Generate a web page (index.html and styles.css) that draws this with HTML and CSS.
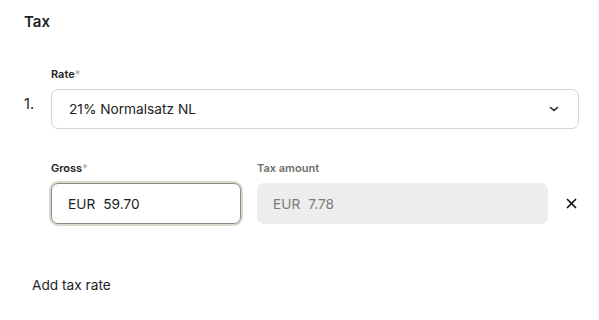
FILE: index.html
```html
<!DOCTYPE html>
<html>
<head>
<meta charset="utf-8">
<link rel="stylesheet" href="styles.css">
</head>
<body>
<div class="page">
  <h2 class="title">Tax</h2>
  <div class="rate-row">
    <div class="index">1.</div>
    <div class="rate-fields">
      <div class="field">
        <label class="label">Rate<span class="req">*</span></label>
        <div class="select">
          <span>21% Normalsatz NL</span>
          <svg class="chev" width="10" height="6" viewBox="0 0 10 6"><path d="M1.5 1.5 L5 4.5 L8.5 1.5" fill="none" stroke="#222" stroke-width="1.6" stroke-linecap="round" stroke-linejoin="round"/></svg>
        </div>
      </div>
      <div class="amount-row">
        <div class="field gross">
          <label class="label">Gross<span class="req">*</span></label>
          <div class="input focused"><span class="cur">EUR</span><span>59.70</span></div>
        </div>
        <div class="field taxamt">
          <label class="label muted">Tax amount</label>
          <div class="input disabled"><span class="cur">EUR</span><span>7.78</span></div>
        </div>
        <button class="remove" aria-label="Remove">
          <svg width="11" height="11" viewBox="0 0 11 11"><path d="M1.5 1.5 L9.5 9.5 M9.5 1.5 L1.5 9.5" stroke="#111" stroke-width="1.7" stroke-linecap="round"/></svg>
        </button>
      </div>
    </div>
  </div>
  <div class="add">Add tax rate</div>
</div>
</body>
</html>
```
FILE: styles.css
```css
* { box-sizing: border-box; }
body {
  margin: 0;
  background: #fff;
  font-family: Inter, "Noto Sans", sans-serif;
  color: #222;
}
.page {
  padding: 13px 20px 0 24px;
}
.title {
  margin: 0;
  font-size: 15px;
  font-weight: 600;
  line-height: 18px;
  color: #1f1f1f;
}
.rate-row {
  display: flex;
  margin-top: 36px;
}
.index {
  width: 27px;
  font-size: 14.5px;
  padding-top: 26px;
  line-height: 22px;
}
.rate-fields {
  flex: 1;
}
.field {
  display: flex;
  flex-direction: column;
}
.label {
  font-size: 11px;
  font-weight: 600;
  line-height: 14px;
  color: #222;
  margin-bottom: 8px;
}
.label.muted { color: #6f6f6a; }
.req { color: #a6a6a0; font-weight: 400; }
.select {
  height: 40px;
  border: 1px solid #d6d5cd;
  border-radius: 7px;
  display: flex;
  align-items: center;
  justify-content: space-between;
  padding: 0 19px 0 17px;
  font-size: 13.7px;
}
.amount-row {
  display: flex;
  align-items: flex-end;
  margin-top: 32px;
}
.gross { width: 190px; }
.taxamt { width: 291px; margin-left: 16px; }
.input {
  height: 41px;
  border-radius: 7px;
  display: flex;
  align-items: center;
  padding: 0 16px;
  font-size: 13.7px;
}
.cur { margin-right: 8px; }
.input.focused {
  border: 1px solid #8d8c80;
  box-shadow: 0 0 0 2px #d9d8cf;
  color: #1f1f1f;
}
.input.disabled {
  background: #ededed;
  color: #7b7b78;
}
.remove {
  border: 0;
  background: none;
  padding: 0;
  margin-left: 18px;
  height: 41px;
  display: flex;
  align-items: center;
  cursor: pointer;
}
.add {
  margin-top: 53px;
  margin-left: 8px;
  font-size: 13.7px;
  color: #222;
}
```
